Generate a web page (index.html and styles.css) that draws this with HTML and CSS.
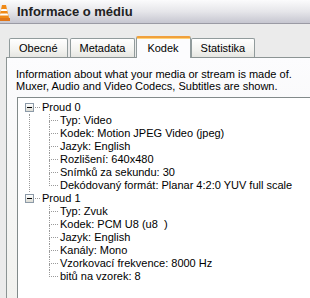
FILE: index.html
```html
<!DOCTYPE html>
<html lang="cs">
<head>
    <meta charset="UTF-8">
    <title>Informace o médiu</title>
    <link rel="stylesheet" href="styles.css">
</head>
<body>
    <div class="window">
        <!-- Titulek okna -->
        <div class="titlebar">
            <svg class="cone" width="12" height="18" viewBox="0 0 12 18">
                <path d="M4 1 L8 1 L11 14 L1 14 Z" fill="#f08a18"/>
                <path d="M3.4 5 L8.6 5 L9.1 7 L2.9 7 Z" fill="#fff"/>
                <path d="M2.4 9.5 L9.6 9.5 L10.1 11.5 L1.9 11.5 Z" fill="#fff"/>
                <rect x="0" y="14" width="12" height="3" fill="#e0761a"/>
            </svg>
            <h1>Informace o médiu</h1>
        </div>

        <!-- Záložky -->
        <div class="tabs">
            <div class="tab">Obecné</div>
            <div class="tab">Metadata</div>
            <div class="tab active">Kodek</div>
            <div class="tab">Statistika</div>
        </div>

        <div class="panel">
            <p class="info">Information about what your media or stream is made of.<br>Muxer, Audio and Video Codecs, Subtitles are shown.</p>

            <div class="treebox">
                <ul class="tree">
                    <li class="node">
                        <div class="row"><span class="toggle"></span><span class="hstub"></span>Proud 0</div>
                        <ul class="kids">
                            <li><span class="stub"><i class="up"></i><i class="down"></i></span>Typ: Video</li>
                            <li><span class="stub"><i class="up"></i><i class="down"></i></span>Kodek: Motion JPEG Video (jpeg)</li>
                            <li><span class="stub"><i class="up"></i><i class="down"></i></span>Jazyk: English</li>
                            <li><span class="stub"><i class="up"></i><i class="down"></i></span>Rozlišení: 640x480</li>
                            <li><span class="stub"><i class="up"></i><i class="down"></i></span>Snímků za sekundu: 30</li>
                            <li class="last"><span class="stub"><i class="up"></i><i class="down"></i></span>Dekódovaný formát: Planar 4:2:0 YUV full scale</li>
                        </ul>
                    </li>
                    <li class="node last-node">
                        <div class="row"><span class="toggle"></span><span class="hstub"></span>Proud 1</div>
                        <ul class="kids">
                            <li><span class="stub"><i class="up"></i><i class="down"></i></span>Typ: Zvuk</li>
                            <li><span class="stub"><i class="up"></i><i class="down"></i></span>Kodek: PCM U8 (u8&nbsp;&nbsp;)</li>
                            <li><span class="stub"><i class="up"></i><i class="down"></i></span>Jazyk: English</li>
                            <li><span class="stub"><i class="up"></i><i class="down"></i></span>Kanály: Mono</li>
                            <li><span class="stub"><i class="up"></i><i class="down"></i></span>Vzorkovací frekvence: 8000 Hz</li>
                            <li class="last"><span class="stub"><i class="up"></i><i class="down"></i></span>bitů na vzorek: 8</li>
                        </ul>
                    </li>
                </ul>
            </div>
        </div>
    </div>
</body>
</html>
```

FILE: styles.css
```css
body {
    margin: 0;
    font-family: 'Liberation Sans', Arial, sans-serif;
    font-size: 11px;
    color: #000;
    background-color: #ebebeb;
}
.window {
    width: 310px;
    height: 298px;
    overflow: hidden;
}
.titlebar {
    height: 23px;
    display: flex;
    align-items: center;
    border-bottom: 1px solid #9a9aa4;
    background: linear-gradient(#fbfbfc, #e6e6ea 50%, #c6c6d0);
}
.cone {
    margin-left: -2px;
    margin-top: 2px;
}
.titlebar h1 {
    margin: 0 0 0 7px;
    font-size: 13px;
    font-weight: bold;
    color: #222;
}
.tabs {
    display: flex;
    align-items: flex-end;
    margin-top: 12px;
    padding-left: 9px;
}
.tab {
    height: 18px;
    line-height: 19px;
    padding: 0 9px;
    margin-right: 2px;
    border: 1px solid #919b9c;
    border-bottom: none;
    border-radius: 2px 2px 0 0;
    background: linear-gradient(#ffffff, #f3f3f0 60%, #e6e6e2);
    color: #000;
}
.tab.active {
    height: 20px;
    line-height: 21px;
    padding: 0 11px 0 10px;
    margin: 0 0 -1px -1px;
    background: #fcfcfe;
    border-top: 2px solid #f0a03c;
    box-shadow: inset 0 1px 0 #ffd27a;
    position: relative;
}
.panel {
    margin-left: 6px;
    width: 320px;
    height: 260px;
    padding: 10px 0 0 9px;
    border: 1px solid #8c9494;
    background: linear-gradient(#fcfcfe, #f0f0ec);
}
.info {
    margin: 0;
    line-height: 12px;
}
.treebox {
    margin: 5px 0 0 1px;
    height: 220px;
    border: 1px solid #828a8a;
    background-color: #fff;
}
.tree, .kids {
    list-style: none;
    margin: 0;
    padding: 0;
}
.tree {
    padding: 3px 0 0 7px;
}
.row, .kids li {
    height: 13px;
    line-height: 13px;
    display: flex;
    align-items: center;
    white-space: nowrap;
}
.toggle {
    width: 7px;
    height: 7px;
    border: 1px solid #8c9aa8;
    background: linear-gradient(#ffffff, #dcdcd4);
    position: relative;
}
.toggle::after {
    content: '';
    position: absolute;
    left: 1px;
    top: 3px;
    width: 5px;
    height: 1px;
    background-color: #000;
}
.hstub {
    width: 5px;
    margin: 0 2px 0 1px;
    border-bottom: 1px dotted #9a9a9a;
}
.kids {
    margin-left: 4px;
    padding-left: 19px;
    border-left: 1px dotted #9a9a9a;
}
.last-node .kids {
    border-left-color: transparent;
}
.stub {
    width: 9px;
    height: 13px;
    margin-right: 2px;
    display: flex;
    flex-direction: column;
}
.stub i {
    display: block;
    border-left: 1px dotted #9a9a9a;
}
.stub .up {
    height: 6px;
    border-bottom: 1px dotted #9a9a9a;
}
.stub .down {
    flex: 1;
}
.kids li.last .down {
    border-left-color: transparent;
}
```
